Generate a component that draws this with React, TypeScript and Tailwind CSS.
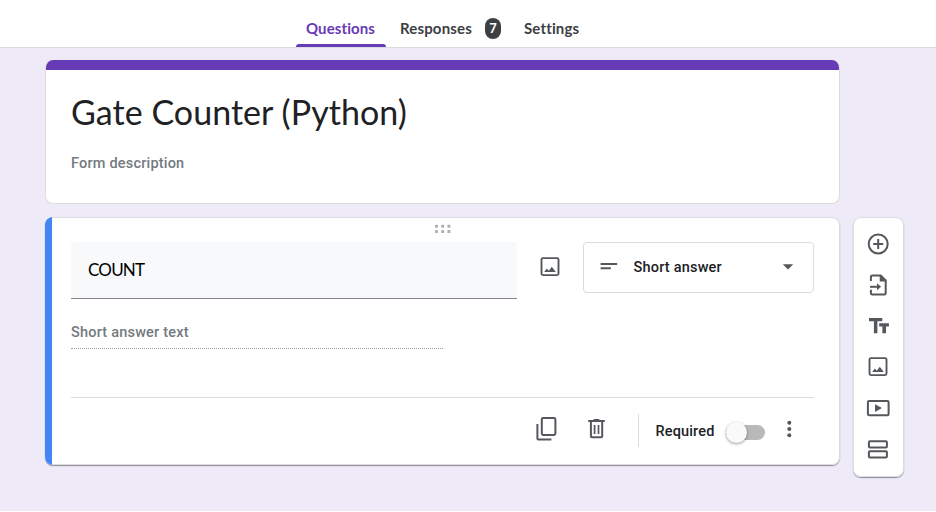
import type { ReactNode } from "react";

function Icon({ w = 24, h = 24, children }: { w?: number; h?: number; children: ReactNode }) {
  return (
    <svg width={w} height={h} viewBox={`0 0 ${w} ${h}`} fill="none" stroke="#54585d" strokeWidth="2" className="block shrink-0">
      {children}
    </svg>
  );
}

const ImageIcon = () => (
  <Icon>
    <rect x="3.5" y="3.1" width="17" height="17" rx="1.5" strokeWidth="1.9" />
    <path d="M6.2 17l2.6-3.6 2 2.3 3-4 4 5.3z" fill="#54585d" stroke="none" />
  </Icon>
);

const tools: { name: string; icon: ReactNode }[] = [
  {
    name: "Add question",
    icon: (
      <Icon>
        <circle cx="12.2" cy="12" r="9.5" />
        <path d="M12.2 7v10M7.2 12h10" />
      </Icon>
    ),
  },
  {
    name: "Import questions",
    icon: (
      <Icon>
        <path d="M4.9 7.9V3.8a1.4 1.4 0 0 1 1.4-1.4h8.4l5 5v12.8a1.4 1.4 0 0 1-1.4 1.4h-12a1.4 1.4 0 0 1-1.4-1.4v-3.4" />
        <path d="M13.7 2v6.4h6.5z" fill="#54585d" stroke="none" />
        <path d="M4 13.8h8" />
        <path d="M11 10.3l4.1 3.5-4.1 3.5z" fill="#54585d" stroke="none" />
      </Icon>
    ),
  },
  {
    name: "Add title and description",
    icon: (
      <Icon>
        <path d="M3 4h13.3v3.3h-4.9v12H7.9v-12H3zM13.2 9.2h9.7v3.2H20v6.9h-3.6v-6.9h-3.2z" fill="#54585d" stroke="none" />
      </Icon>
    ),
  },
  { name: "Add image", icon: <ImageIcon /> },
  {
    name: "Add video",
    icon: (
      <Icon>
        <rect x="1.9" y="4.9" width="20.7" height="14.3" rx="1.2" />
        <path d="M9 8.2l7 3.9-7 3.9z" fill="#54585d" stroke="none" />
      </Icon>
    ),
  },
  {
    name: "Add section",
    icon: (
      <Icon>
        <rect x="2.9" y="3.3" width="18" height="6.3" rx="1" />
        <rect x="2.9" y="13.3" width="18" height="6.3" rx="1" />
      </Icon>
    ),
  },
];

function Tabs() {
  return (
    <header className="flex h-12 shrink-0 border-b border-[#dadce0] bg-white pl-[296px] font-[Lato,sans-serif] text-[15px] font-bold text-[#3c4043]">
      <div className="flex w-[90px] flex-col">
        <div className="h-[44px] pt-[17px] pl-[10px] leading-[22px] tracking-[0.1px] whitespace-nowrap text-[#673ab7]">Questions</div>
        <div className="h-[3px] rounded-t-[3px] bg-[#673ab7]" />
      </div>
      <div className="ml-[14px] w-[85px] pt-[17px] leading-[22px] tracking-[0.15px] whitespace-nowrap">Responses</div>
      <div className="mt-[18px] flex h-[21px] w-4 items-center justify-center rounded-full bg-[#3c4043] text-[13px] text-white">7</div>
      <div className="ml-[23px] pt-[17px] leading-[22px] tracking-[0.15px] whitespace-nowrap">Settings</div>
    </header>
  );
}

function TitleCard() {
  return (
    <section className="h-[144px] overflow-hidden rounded-lg border border-[#dadce0] border-t-0 bg-white">
      <div className="-mx-px h-[10px] bg-[#673ab7]" />
      <h1 className="mt-[19px] pl-[25px] font-[Lato,sans-serif] text-[34px] leading-[46px] font-normal tracking-[0.05px] whitespace-nowrap text-[#202124]">Gate Counter (Python)</h1>
      <p className="mt-[19px] pl-[25px] text-[14.5px] leading-[20px] tracking-[0.2px] text-[#747a80]">Form description</p>
    </section>
  );
}

function QuestionCard() {
  return (
    <section className="mt-[13px] flex h-[248px] overflow-hidden rounded-lg bg-white shadow-[0_1px_1px_rgba(0,0,0,0.4),inset_0_0_0_1px_#dadce0]">
      <div className="w-[6.5px] shrink-0 bg-[#4285f4]" />
      <div className="flex flex-1 flex-col pr-[26px] pl-[19.5px]">
        <div className="flex h-[25px] justify-center pt-[6.5px]">
          <svg width="18" height="12" viewBox="0 0 18 12" fill="#afb1b3">
            {[1, 7.2, 13.4].map((x) => (
              <g key={x}>
                <rect x={x} y="1.8" width="3" height="3" rx="0.7" />
                <rect x={x} y="7.1" width="3" height="3" rx="0.7" />
              </g>
            ))}
          </svg>
        </div>
        <div className="flex">
          <div className="h-[57.5px] w-[446px] rounded-t border-b border-[#80868b] bg-[#f8f9fa] pt-[16.5px] pl-[17px] font-[Lato,sans-serif] text-[17px] leading-6 font-normal tracking-[-0.8px] text-black">COUNT</div>
          <div className="mt-[13px] ml-[21px]">
            <ImageIcon />
          </div>
          <div className="ml-[21px] flex h-[51px] w-[231px] items-center rounded border border-[#dadce0] pl-4">
            <svg width="18" height="10" viewBox="0 0 18 10" fill="#54585d">
              <path d="M.6.9h16.6v2.2H.6zM.6 5.2h10.2v2.1H.6z" />
            </svg>
            <span className="ml-[15.5px] w-[149px] pt-[2px] text-[14.5px] tracking-[0.2px] text-[#202124]">Short answer</span>
            <svg width="12" height="6" viewBox="0 0 12 6" fill="#54585d" className="-ml-[0.5px]">
              <path d="M.8.3h10.4L6 5.5z" />
            </svg>
          </div>
        </div>
        <div className="mt-[24px] h-[26px] w-[372px] border-b border-dotted border-[#9a9da1] text-[14.5px] leading-[20px] tracking-[0.2px] text-[#747a80]">Short answer text</div>
        <div className="mt-[48px] flex h-[67px] border-t border-[#dadce0]">
          <div className="mt-[18px] ml-[464px]">
            <Icon h={26}>
              <rect x="6.8" y="2.1" width="13.6" height="16.8" rx="1.4" />
              <path d="M2.4 8v14.4a1 1 0 0 0 1 1h13" />
            </Icon>
          </div>
          <div className="mt-[19px] ml-[26px]">
            <Icon>
              <path d="M3.2 4.1h16.6M8.6 2.9h5.7M5.9 4v15.2a1 1 0 0 0 1 1h9.3a1 1 0 0 0 1-1V4" />
              <path d="M9.6 8v9M13.5 8v9" strokeWidth="1.7" />
            </Icon>
          </div>
          <div className="mt-[16px] ml-[29px] h-[33px] w-px bg-[#dadce0]" />
          <span className="mt-[24px] ml-[16.5px] w-[70.5px] text-[14.5px] leading-5 tracking-[0.15px] text-[#202124]">Required</span>
          <div className="mt-[27px] flex h-[14.5px] w-[39px] items-center rounded-full bg-[#b9b9b9]">
            <div className="h-[21px] w-[21px] shrink-0 rounded-full bg-[#fafafa] shadow-[0_1px_3px_rgba(0,0,0,0.4)]" />
          </div>
          <svg width="6" height="18" viewBox="0 0 6 18" fill="#54585d" className="mt-[22px] ml-[21px]">
            <circle cx="3.3" cy="2.8" r="2" />
            <circle cx="3.3" cy="9" r="2" />
            <circle cx="3.3" cy="15.2" r="2" />
          </svg>
        </div>
      </div>
    </section>
  );
}

export default function App() {
  return (
    <div className="flex h-[512px] w-[936px] flex-col overflow-hidden border-b border-white bg-[#eeeaf7] font-[Roboto,sans-serif] font-[480]">
      <Tabs />
      <main className="flex pt-[11.5px] pl-[45px]">
        <div className="w-[795px]">
          <TitleCard />
          <QuestionCard />
        </div>
        <aside className="mt-[157px] ml-[13px] flex h-[260px] w-[50.5px] flex-col items-center rounded-lg bg-white pt-[6.5px] shadow-[0_1px_1px_rgba(0,0,0,0.4),inset_0_0_0_1px_#dadce0]">
          {tools.map((t) => (
            <button key={t.name} aria-label={t.name} className="-ml-px flex h-[41.2px] items-center">
              {t.icon}
            </button>
          ))}
        </aside>
      </main>
    </div>
  );
}
